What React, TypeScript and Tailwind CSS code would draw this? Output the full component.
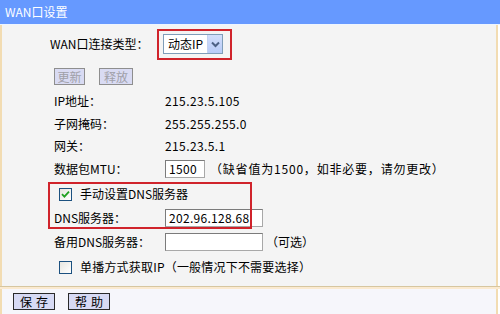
import React from 'react';

function CheckBox({ checked }: { checked?: boolean }) {
  return (
    <div className="w-[13px] h-[13px] border border-[#1c5180] bg-gradient-to-br from-[#e6e6e0] to-white flex items-center justify-center">
      {checked && (
        <svg width="9" height="9" viewBox="0 0 9 9">
          <path d="M1 4.2 L3.4 6.6 L8 1.6" fill="none" stroke="#21a121" strokeWidth="1.8" />
        </svg>
      )}
    </div>
  );
}

function TextBox({ value, w }: { value?: string; w: string }) {
  return (
    <div className={`${w} h-[18px] bg-white border border-[#7b7b7b] border-b-[#a8a8a8] border-r-[#a8a8a8] flex items-center pl-[3px] leading-[14px] tracking-[0.3px]`}>
      {value}
    </div>
  );
}

function Row({ h, children }: { h: string; children: React.ReactNode }) {
  return <div className={`${h} flex items-center pl-[52px]`}>{children}</div>;
}

function Label({ children }: { children: React.ReactNode }) {
  return <div className="w-[111px] leading-[14px]">{children}</div>;
}

export default function App() {
  return (
    <div className="relative w-[500px] h-[314px] bg-white flex flex-col text-[12px] text-black font-['Noto_Sans_CJK_SC','Noto_Sans_CJK_JP',sans-serif] overflow-hidden">
      {/* header */}
      <div className="h-[24px] bg-[#6699ff] text-white flex items-center pl-[5px] leading-[14px]">WAN口设置</div>
      <div className="h-px bg-[#eef5ff]" />

      {/* body */}
      <div className="flex-1 flex flex-col mr-[2px] bg-[#f4f4f4] border-l-2 border-r-2 border-[#f2dcb2]">
        <div className="h-[38px] flex items-center pl-[48px]">
          <div className="w-[113px] leading-[14px]">WAN口连接类型：</div>
          <div className="w-[60px] h-[20px] bg-white border border-[#7f9db9] flex items-center">
            <span className="flex-1 pl-[4px] leading-[14px]">动态IP</span>
            <div className="w-[15px] h-[18px] bg-gradient-to-b from-[#d2defb] to-[#b8cbf7] border-l border-[#c4d2f0] flex items-center justify-center">
              <svg width="9" height="7" viewBox="0 0 9 7">
                <path d="M1 1.5 L4.5 5 L8 1.5" fill="none" stroke="#4d6185" strokeWidth="2" />
              </svg>
            </div>
          </div>
        </div>

        <Row h="h-[27px]">
          <div className="w-[31px] h-[17px] bg-[#d9dbf3] border border-[#8e8e8e] text-[#a0a0a8] flex items-center justify-center leading-[14px]">更新</div>
          <div className="ml-[14px] w-[34px] h-[17px] bg-[#d9dbf3] border border-[#8e8e8e] text-[#a0a0a8] flex items-center justify-center leading-[14px]">释放</div>
        </Row>

        <Row h="h-[22px]">
          <Label>IP地址：</Label>
          <span className="leading-[14px] tracking-[0.4px]">215.23.5.105</span>
        </Row>
        <Row h="h-[23px]">
          <Label>子网掩码：</Label>
          <span className="leading-[14px] tracking-[0.4px]">255.255.255.0</span>
        </Row>
        <Row h="h-[22px]">
          <Label>网关：</Label>
          <span className="leading-[14px] tracking-[0.4px]">215.23.5.1</span>
        </Row>
        <Row h="h-[23px]">
          <Label>数据包MTU：</Label>
          <TextBox w="w-[40px]" value="1500" />
          <span className="ml-[5px] leading-[14px] tracking-[0.8px]">（缺省值为1500，如非必要，请勿更改）</span>
        </Row>

        <div className="h-[24px] flex items-center pl-[57px] mt-[2px]">
          <CheckBox checked />
          <span className="ml-[8px] leading-[14px]">手动设置DNS服务器</span>
        </div>
        <Row h="h-[23px]">
          <Label>DNS服务器：</Label>
          <TextBox w="w-[98px]" value="202.96.128.68" />
        </Row>
        <Row h="h-[25px]">
          <Label>备用DNS服务器：</Label>
          <TextBox w="w-[98px]" />
          <span className="ml-[3px] leading-[14px]">（可选）</span>
        </Row>
        <div className="h-[26px] flex items-center pl-[57px]">
          <CheckBox />
          <span className="ml-[8px] leading-[14px] tracking-[0.2px]">单播方式获取IP（一般情况下不需要选择）</span>
        </div>
        <div className="flex-1" />
      </div>

      {/* footer */}
      <div className="h-px bg-[#d6c6a0]" />
      <div className="h-[2px] bg-[#fbead0]" />
      <div className="h-[25px] mr-[2px] flex items-center pl-[11px] bg-[#f6f6fb] border-l-2 border-r-2 border-[#f2dcb2]">
        <div className="w-[42px] h-[17px] bg-[#d7daf4] border border-[#2a2a2a] flex items-center justify-center leading-[14px] tracking-[4px] pl-[4px]">保存</div>
        <div className="ml-[13px] w-[42px] h-[17px] bg-[#d7daf4] border border-[#2a2a2a] flex items-center justify-center leading-[14px] tracking-[4px] pl-[4px]">帮助</div>
      </div>

      {/* annotation boxes drawn over the page */}
      <div className="absolute left-[157px] top-[29px] w-[75px] h-[31px] border-2 border-[#d0232b] pointer-events-none" />
      <div className="absolute left-[48px] top-[182px] w-[204px] h-[47px] border-2 border-[#d0232b] pointer-events-none" />
    </div>
  );
}
